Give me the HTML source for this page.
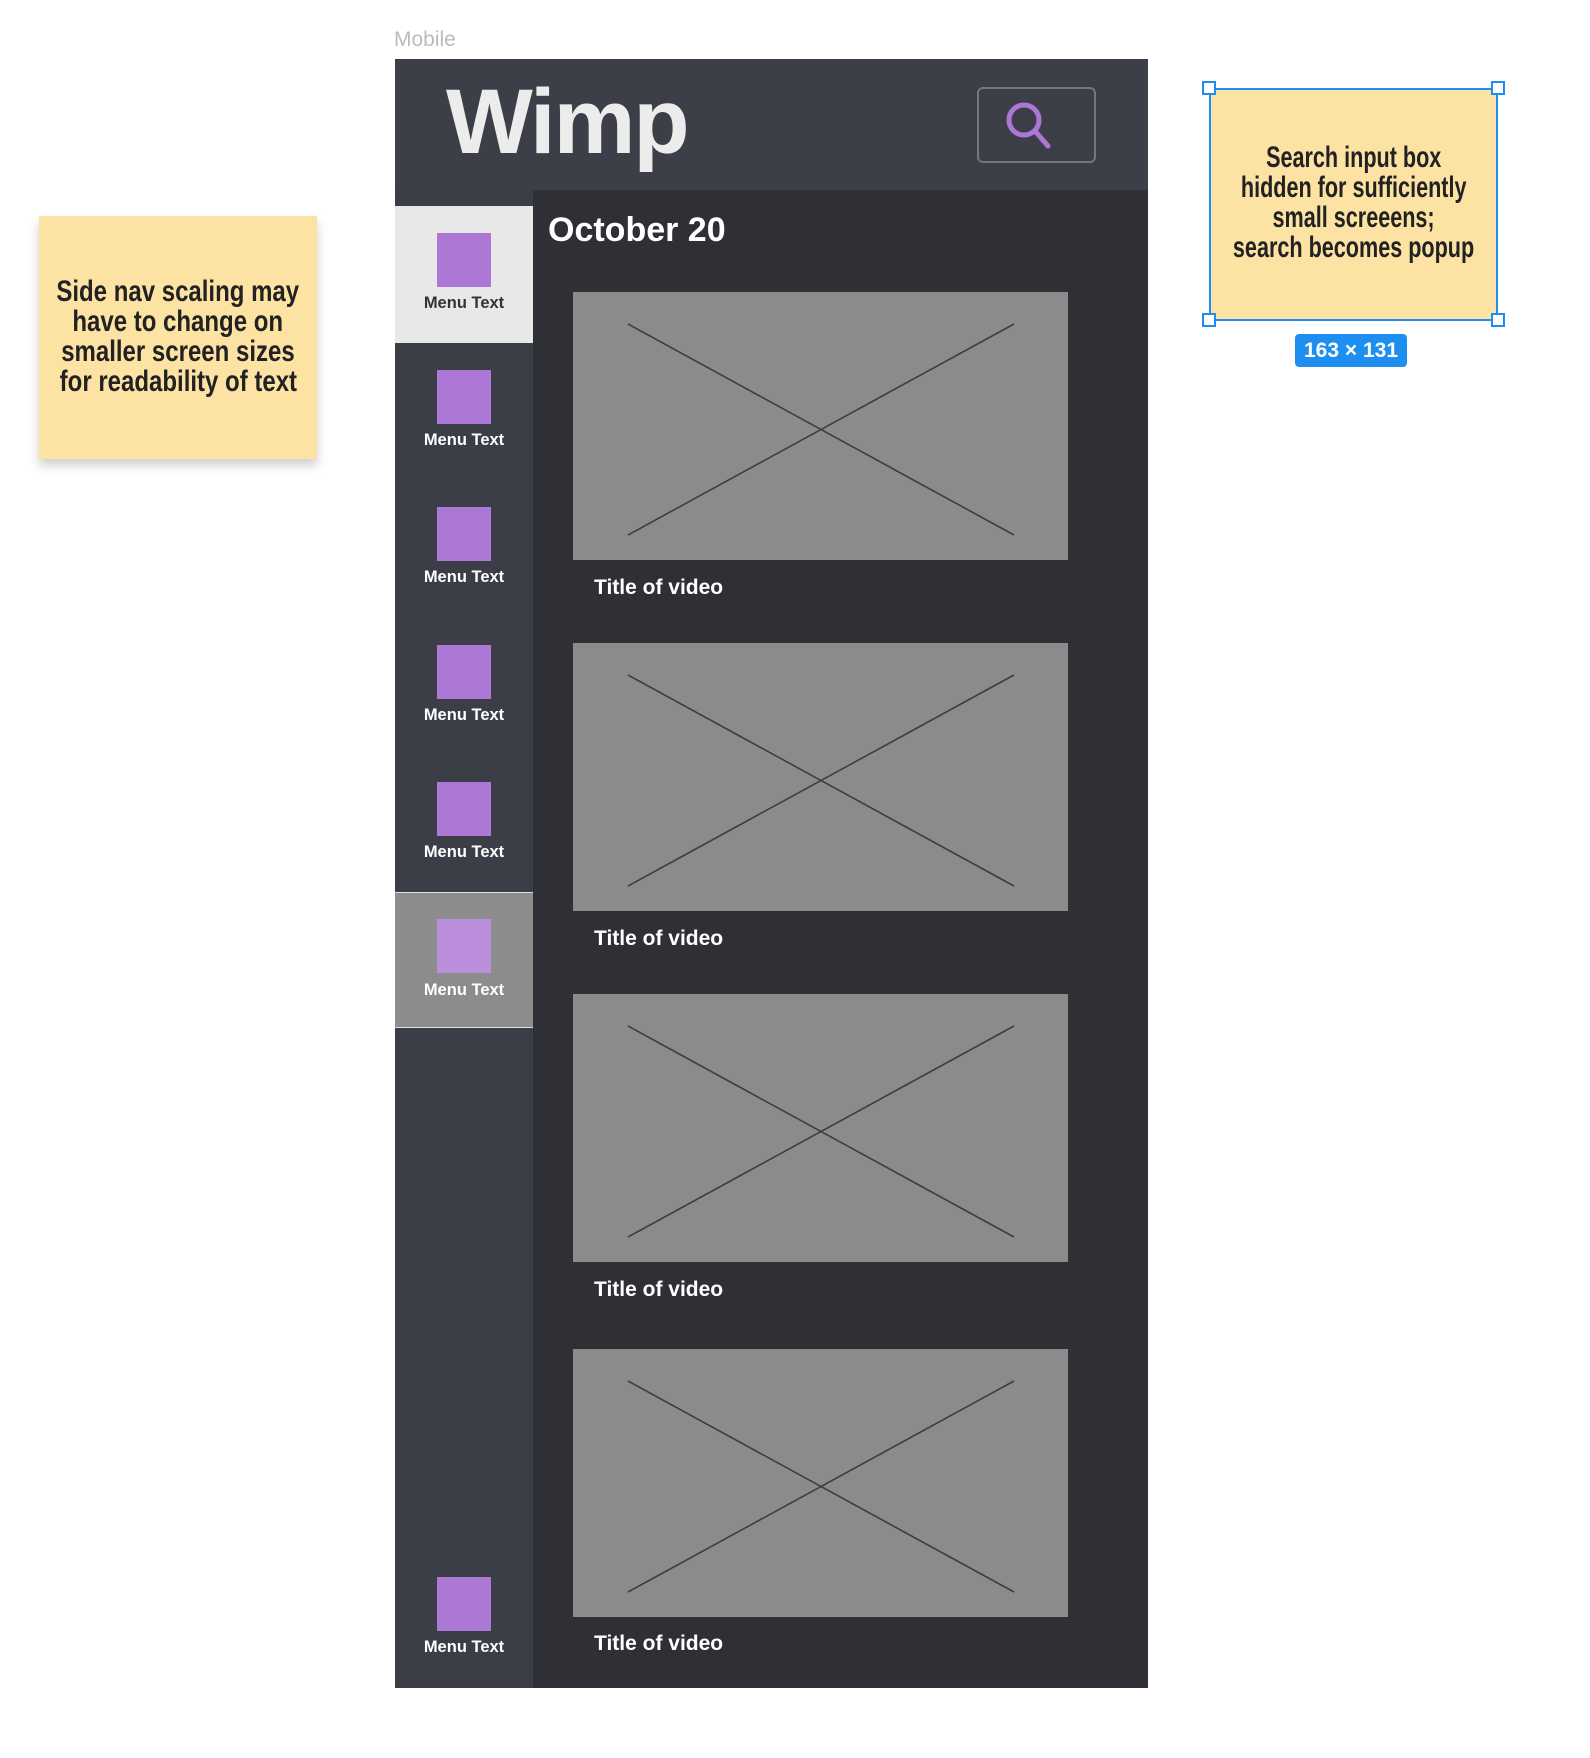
<!DOCTYPE html>
<html><head><meta charset="utf-8"><style>
*{margin:0;padding:0;box-sizing:border-box}
body{width:1590px;height:1758px;background:#fff;position:relative;overflow:hidden;font-family:"Liberation Sans",sans-serif}
.a{position:absolute}
.mi{position:absolute;left:395px;width:138px;height:137px}
.mi .ic{position:absolute;left:42px;top:27px;width:54px;height:54px;background:#ad77d6}
.mi .t{position:absolute;left:0;width:138px;top:88px;text-align:center;font-size:16.5px;font-weight:bold;color:#fff}
.th{position:absolute;left:573px;width:495px;height:268px;background:#8b8b8b}
.th svg{position:absolute;left:0;top:0}
.tt{position:absolute;left:594px;font-size:21px;font-weight:bold;color:#fff}
.note{font-weight:bold;color:#222;font-size:30px;line-height:30px;white-space:nowrap}
.note .l{display:flex;justify-content:center;width:100%;height:30px}
.note span{display:block;transform:scaleX(0.72);transform-origin:center;flex:none}
.n1 span{transform:scaleX(0.8)}
</style></head><body>
<div class="a" style="left:394px;top:28px;font-size:21px;color:#bbb">Mobile</div>
<div class="a" style="left:395px;top:59px;width:753px;height:1629px;background:#2e3036"></div>
<div class="a" style="left:395px;top:59px;width:753px;height:131px;background:#3c3f48"></div>
<div class="a" style="left:395px;top:190px;width:138px;height:1498px;background:#3b3e47"></div>
<div class="a" style="left:446px;top:72px;font-size:92px;font-weight:900;color:#ececec;letter-spacing:-2px;line-height:100px">Wimp</div>
<div class="a" style="left:977px;top:87px;width:119px;height:76px;border:2px solid #777;border-radius:6px"></div>
<svg class="a" style="left:1000px;top:96px" width="60" height="60"><circle cx="24" cy="24" r="15" fill="none" stroke="#ad77d6" stroke-width="5"/><line x1="35" y1="35" x2="48" y2="50" stroke="#ad77d6" stroke-width="5" stroke-linecap="round"/></svg>
<div class="mi" style="top:206px;background:#e8e8e8"><div class="ic"></div><div class="t" style="color:#333">Menu Text</div></div>
<div class="mi" style="top:343px"><div class="ic"></div><div class="t">Menu Text</div></div>
<div class="mi" style="top:480px"><div class="ic"></div><div class="t">Menu Text</div></div>
<div class="mi" style="top:618px"><div class="ic"></div><div class="t">Menu Text</div></div>
<div class="mi" style="top:755px"><div class="ic"></div><div class="t">Menu Text</div></div>
<div class="mi" style="top:892px;height:136px;background:#8c8c8c;border-top:1px solid #ddd;border-bottom:1px solid #ddd"><div class="ic" style="background:#bb8ddd;top:26px"></div><div class="t">Menu Text</div></div>
<div class="mi" style="top:1550px"><div class="ic"></div><div class="t">Menu Text</div></div>
<div class="a" style="left:548px;top:211px;font-size:34px;font-weight:bold;color:#fff">October 20</div>
<div class="th" style="top:292px"><svg width="495" height="268"><path d="M55 32L441 243M441 32L55 243" stroke="#3c3e44" stroke-width="1.6"/></svg></div>
<div class="tt" style="top:576px">Title of video</div>
<div class="th" style="top:643px"><svg width="495" height="268"><path d="M55 32L441 243M441 32L55 243" stroke="#3c3e44" stroke-width="1.6"/></svg></div>
<div class="tt" style="top:927px">Title of video</div>
<div class="th" style="top:994px"><svg width="495" height="268"><path d="M55 32L441 243M441 32L55 243" stroke="#3c3e44" stroke-width="1.6"/></svg></div>
<div class="tt" style="top:1278px">Title of video</div>
<div class="th" style="top:1349px"><svg width="495" height="268"><path d="M55 32L441 243M441 32L55 243" stroke="#3c3e44" stroke-width="1.6"/></svg></div>
<div class="tt" style="top:1632px">Title of video</div>
<div class="a note n1" style="left:39px;top:216px;width:278px;height:243px;background:#fde3a3;box-shadow:0 6px 10px rgba(0,0,0,.2);padding-top:61px"><div class="l"><span>Side nav scaling may</span></div><div class="l"><span>have to change on</span></div><div class="l"><span>smaller screen sizes</span></div><div class="l"><span>for readability of text</span></div></div>
<div class="a note" style="left:1209px;top:88px;width:289px;height:233px;background:#fde3a3;border:2px solid #1e8ff0;padding-top:53px"><div class="l"><span>Search input box</span></div><div class="l"><span>hidden for sufficiently</span></div><div class="l"><span>small screeens;</span></div><div class="l"><span>search becomes popup</span></div></div>
<div class="a" style="left:1202px;top:81px;width:14px;height:14px;background:#fff;border:2px solid #1e8ff0"></div>
<div class="a" style="left:1491px;top:81px;width:14px;height:14px;background:#fff;border:2px solid #1e8ff0"></div>
<div class="a" style="left:1202px;top:313px;width:14px;height:14px;background:#fff;border:2px solid #1e8ff0"></div>
<div class="a" style="left:1491px;top:313px;width:14px;height:14px;background:#fff;border:2px solid #1e8ff0"></div>
<div class="a" style="left:1295px;top:334px;width:112px;height:33px;background:#1e8ff0;border-radius:4px;color:#fff;font-size:21px;font-weight:bold;text-align:center;line-height:33px">163 × 131</div>
</body></html>
